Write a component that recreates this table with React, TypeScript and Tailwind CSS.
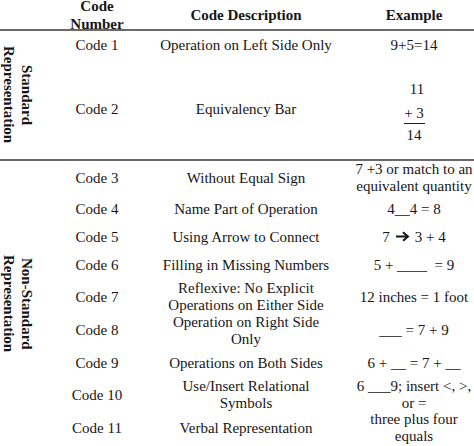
import React from "react";

const Arrow = () => (
  <svg width="15" height="11" viewBox="0 0 15 11" className="inline-block mx-[5px] align-[0px]">
    <path d="M1 5.5 H12.5" stroke="#111" strokeWidth="2" fill="none" />
    <path d="M8 1.2 L13 5.5 L8 9.8" stroke="#111" strokeWidth="2" fill="none" strokeLinejoin="miter" />
  </svg>
);

type Row = { h: number; code: string; desc: React.ReactNode; ex: React.ReactNode };

const nonStd: Row[] = [
  { h: 34, code: "Code 3", desc: "Without Equal Sign", ex: <>7 +3 or match to an<br />equivalent quantity</> },
  { h: 29, code: "Code 4", desc: "Name Part of Operation", ex: "4__4 = 8" },
  { h: 27, code: "Code 5", desc: "Using Arrow to Connect", ex: <>7<Arrow />3 + 4</> },
  { h: 29, code: "Code 6", desc: "Filling in Missing Numbers", ex: <>5 + ____&nbsp;&nbsp;= 9</> },
  { h: 33, code: "Code 7", desc: <>Reflexive: No Explicit<br />Operations on Either Side</>, ex: "12 inches = 1 foot" },
  { h: 35, code: "Code 8", desc: <>Operation on Right Side<br />Only</>, ex: "___ = 7 + 9" },
  { h: 30, code: "Code 9", desc: "Operations on Both Sides", ex: "6 + __ = 7 + __" },
  { h: 32, code: "Code 10", desc: <>Use/Insert Relational<br />Symbols</>, ex: <>6 ___9; insert &lt;, &gt;,<br />or =</> },
  { h: 36, code: "Code 11", desc: "Verbal Representation", ex: <>three plus four<br />equals</> },
];

function DataRow({ r }: { r: Row }) {
  return (
    <div className="grid grid-cols-[104px_194px_142px] items-center text-center" style={{ height: r.h }}>
      <div className="whitespace-nowrap">{r.code}</div>
      <div className="whitespace-nowrap">{r.desc}</div>
      <div className="whitespace-nowrap">{r.ex}</div>
    </div>
  );
}

function Label({ a, b }: { a: string; b: string }) {
  return (
    <div className="w-[45px] shrink-0 flex items-center justify-start">
      <div className="[writing-mode:vertical-rl] text-center font-bold leading-[18px] whitespace-nowrap">
        {a}
        <br />
        {b}
      </div>
    </div>
  );
}

export default function App() {
  return (
    <div
      className="w-[474px] h-[446px] overflow-hidden bg-white text-[#161616] text-[15px] leading-[17px]"
      style={{ fontFamily: '"Liberation Serif", "Times New Roman", serif' }}
    >
      <div className="w-[485px]">
        {/* header */}
        <div className="flex h-[29px] items-center font-bold leading-[18px]">
          <div className="w-[45px] shrink-0" />
          <div className="grid grid-cols-[104px_194px_142px] items-center text-center">
            <div>
              Code
              <br />
              Number
            </div>
            <div>Code Description</div>
            <div>Example</div>
          </div>
        </div>
        <div className="h-[2px] bg-[#6a6a6a]" />

        {/* standard */}
        <div className="flex h-[128px]">
          <Label a="Standard" b="Representation" />
          <div className="flex flex-col">
            <DataRow r={{ h: 29, code: "Code 1", desc: "Operation on Left Side Only", ex: "9+5=14" }} />
            <div className="grid grid-cols-[104px_194px_142px] items-center text-center h-[99px]">
              <div>Code 2</div>
              <div>Equivalency Bar</div>
              <div className="flex flex-col items-center pt-[6px]">
                <div className="pl-[6px]">11</div>
                <div className="mt-[7px] w-[21px] border-b border-[#222] leading-[17px] pb-[1px] text-center">+ 3</div>
                <div className="pt-[3px]">14</div>
              </div>
            </div>
          </div>
        </div>
        <div className="h-[2px] bg-[#6a6a6a]" />

        {/* non-standard */}
        <div className="flex">
          <Label a="Non-Standard" b="Representation" />
          <div className="flex flex-col">
            {nonStd.map((r) => (
              <DataRow key={r.code} r={r} />
            ))}
          </div>
        </div>
      </div>
    </div>
  );
}
